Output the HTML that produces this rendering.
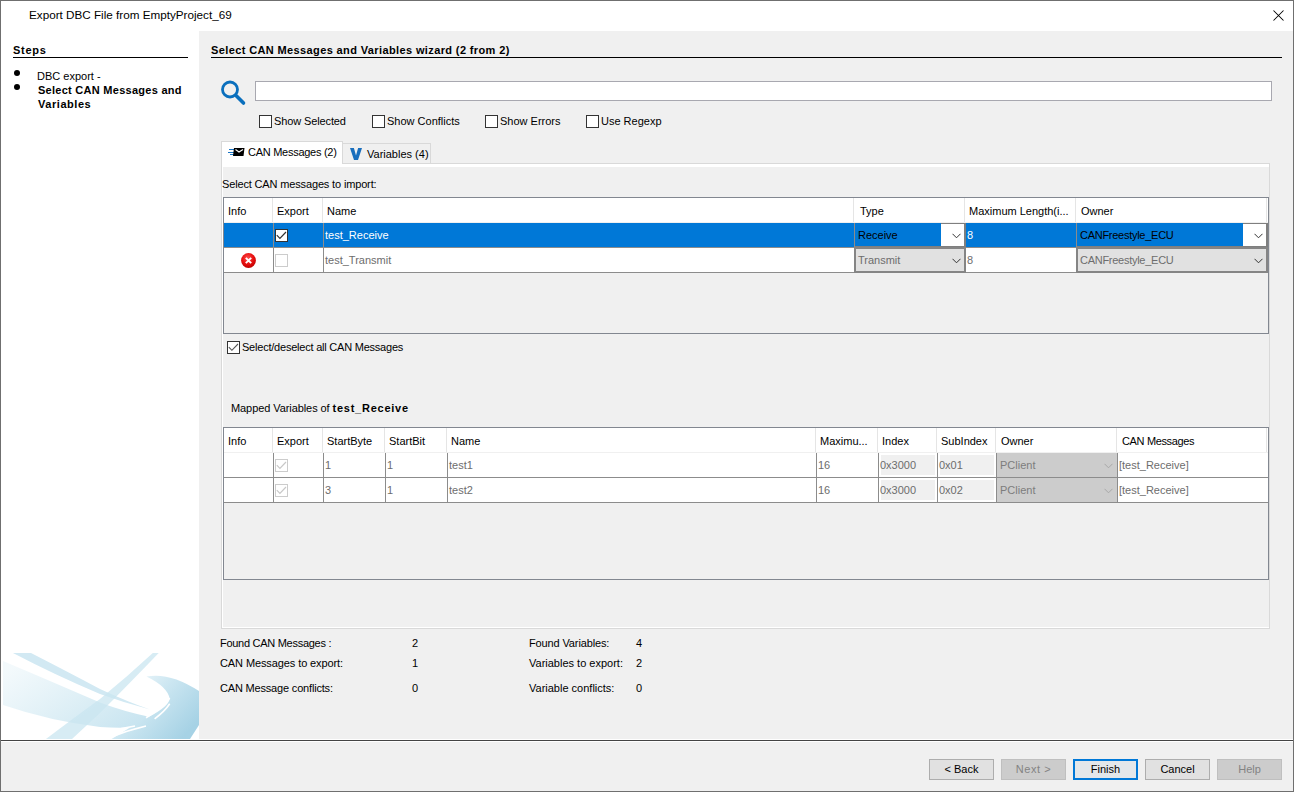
<!DOCTYPE html>
<html><head><meta charset="utf-8">
<style>
*{margin:0;padding:0;box-sizing:border-box}
html,body{width:1294px;height:792px;overflow:hidden;background:#f0f0f0}
body{position:relative;font-family:"Liberation Sans",sans-serif;font-size:11px;color:#000}
.a{position:absolute}
.t{position:absolute;white-space:nowrap;line-height:14px;margin-left:-1px}
.b{font-weight:bold}
.cb{position:absolute;width:13px;height:13px;border:1px solid #333;background:#fff}
.g{color:#6d6d6d}
.hs{position:absolute;top:0;width:1px;height:24px;background:#e5e5e5}
.hb{position:absolute;left:0;top:24px;width:1044px;height:1px;background:#f0f0f0}
.vl{position:absolute;top:25px;width:1px;height:50px;background:#8c8c8c}
.hl{position:absolute;left:0;width:1044px;height:1px;background:#8c8c8c}
.btn{position:absolute;top:759px;width:65px;height:21px;border:1px solid #adadad;background:#e1e1e1;text-align:center;line-height:19px}
.dis{background:#ccc;border-color:#bfbfbf;color:#838383}
</style></head><body>
<!-- window frame -->
<div class="a" style="left:0;top:0;width:1294px;height:792px;border:1px solid #6f6f6f"></div>
<!-- title bar -->
<div class="a" style="left:1px;top:1px;width:1292px;height:30px;background:#fff"></div>
<div class="t" style="left:30px;top:8px;font-size:11.7px">Export DBC File from EmptyProject_69</div>
<svg class="a" style="left:1272px;top:9px" width="13" height="13" viewBox="0 0 13 13"><path d="M1.5 1.5L11.5 11.5M11.5 1.5L1.5 11.5" stroke="#000" stroke-width="1.05"/></svg>
<!-- left panel -->
<div class="a" style="left:1px;top:31px;width:198px;height:708px;background:#fff"></div>

<svg class="a" style="left:0;top:645px" width="199" height="94" viewBox="0 0 199 94">
<defs>
<linearGradient id="gb" x1="0" y1="0.2" x2="1" y2="0.8"><stop offset="0" stop-color="#cfe8f2" stop-opacity="0.25"/><stop offset="0.5" stop-color="#c9e5f0" stop-opacity="0.6"/><stop offset="1" stop-color="#bfe0ee" stop-opacity="0.9"/></linearGradient>
<linearGradient id="gc" x1="0.1" y1="0.1" x2="1" y2="0.7"><stop offset="0" stop-color="#f2f9fc"/><stop offset="0.45" stop-color="#cbe6f1"/><stop offset="1" stop-color="#a6d2e5"/></linearGradient>
</defs>
<path d="M3 16 Q55 38 100 57.6 Q125 67 150 72 L162 80 Q130 84 100 82 Q50 76 3 60 Z" fill="url(#gb)"/>
<path d="M13 8 L31 8 Q70 28 100 44 Q128 57 150 64.5 Q125 58 100 49 Q55 30 13 8 Z" fill="#d2e9f3"/>
<path d="M152.8 8 L158.7 8 Q128 40 100 68 L72 94 L46 94 Q75 72 100 54 Q128 31 152.8 8 Z" fill="#c9e5f0" fill-opacity="0.75"/>
<path d="M146.5 31.5 Q170 27 199 46 L199 80 L190 94 L111.6 94 Q130 82 150 71 Q168 62 169.7 54 Q168 42 146.5 31.5 Z" fill="url(#gc)"/>
<path d="M146 72.7 Q162 64 169.7 53 M154.6 73.8 Q165 66 169.7 58.7 M86 94 Q110 85 135 81 M106 94 Q125 86 146 81" stroke="#fff" stroke-width="1.6" fill="none"/>
</svg>

<div class="a" style="left:1px;top:739px;width:1292px;height:1px;background:#fff"></div>
<div class="a" style="left:1px;top:740px;width:1292px;height:1px;background:#444"></div>
<div class="a" style="left:1px;top:741px;width:1292px;height:1px;background:#fff"></div>

<div class="t b" style="left:14px;top:43px;letter-spacing:0.75px">Steps</div>
<div class="a" style="left:13px;top:57px;width:175px;height:1px;background:#000"></div>
<div class="a" style="left:14px;top:70px;width:6px;height:6px;border-radius:50%;background:#000"></div>
<div class="a" style="left:14px;top:84px;width:6px;height:6px;border-radius:50%;background:#000"></div>
<div class="t" style="left:38px;top:69px">DBC export -</div>
<div class="t b" style="left:39px;top:83px;letter-spacing:0.27px">Select CAN Messages and</div>
<div class="t b" style="left:39px;top:97px;letter-spacing:0.55px">Variables</div>

<!-- header -->
<div class="t b" style="left:212px;top:43px;letter-spacing:0.38px">Select CAN Messages and Variables wizard (2 from 2)</div>
<div class="a" style="left:211px;top:57px;width:1071px;height:1px;background:#000"></div>

<!-- search -->
<svg class="a" style="left:219px;top:79px" width="28" height="28" viewBox="0 0 28 28"><circle cx="11" cy="10.5" r="7.5" fill="none" stroke="#0a6fbd" stroke-width="2.8"/><path d="M17 16.5L24.5 24" stroke="#0a6fbd" stroke-width="3.6" stroke-linecap="round"/></svg>
<div class="a" style="left:255px;top:81px;width:1017px;height:20px;border:1px solid #a8a8b0;background:#fff"></div>

<div class="cb" style="left:259px;top:115px"></div><div class="t" style="left:275px;top:114px;letter-spacing:-0.12px">Show Selected</div>
<div class="cb" style="left:372px;top:115px"></div><div class="t" style="left:388px;top:114px">Show Conflicts</div>
<div class="cb" style="left:485px;top:115px"></div><div class="t" style="left:501px;top:114px">Show Errors</div>
<div class="cb" style="left:586px;top:115px"></div><div class="t" style="left:602px;top:114px">Use Regexp</div>

<!-- tabs -->
<div class="a" style="left:221px;top:163px;width:1049px;height:466px;border:1px solid #d9d9d9;background:#fff"></div>
<div class="a" style="left:223px;top:167px;width:1046px;height:460px;background:#f0f0f0"></div>
<div class="a" style="left:342px;top:143px;width:89px;height:20px;border:1px solid #d9d9d9;border-bottom:none;background:#f0f0f0"></div>
<div class="a" style="left:221px;top:141px;width:122px;height:23px;border:1px solid #d9d9d9;border-bottom:none;background:#fff"></div>
<svg class="a" style="left:227px;top:147px" width="19" height="10" viewBox="0 0 19 10"><path d="M2 2.5H7M1 5.5H7M3 7.5H7" stroke="#1a75c4" stroke-width="1"/><path d="M7 1H17.5L16.5 9H6Z" fill="#000"/><path d="M8.5 2.5L12 5L16 2.5" fill="none" stroke="#fff" stroke-width="1.2"/></svg>
<div class="t" style="left:249px;top:145px;letter-spacing:-0.27px">CAN Messages (2)</div>
<svg class="a" style="left:350px;top:148px" width="12" height="12" viewBox="0 0 12 12"><path d="M0 0H3.9L6 7.6L8.1 0H12L8 12H4Z" fill="#1a6fbd"/></svg>
<div class="t" style="left:368px;top:147px">Variables (4)</div>

<div class="t" style="left:223px;top:177px;letter-spacing:-0.15px">Select CAN messages to import:</div>

<!-- table 1 -->
<div class="a" style="left:223px;top:197px;width:1046px;height:137px;border:1px solid #828790;background:#f0f0f0">
  <div class="a" style="left:0;top:0;width:1044px;height:25px;background:#fff"></div><div class="hb"></div>
  <div class="hs" style="left:48px"></div>
  <div class="hs" style="left:98px"></div>
  <div class="hs" style="left:629px"></div>
  <div class="hs" style="left:740px"></div>
  <div class="hs" style="left:851px"></div>
  <div class="hs" style="left:1042px"></div>
  <div class="t" style="left:5px;top:6px">Info</div>
  <div class="t" style="left:54px;top:6px">Export</div>
  <div class="t" style="left:104px;top:6px">Name</div>
  <div class="t" style="left:637px;top:6px">Type</div>
  <div class="t" style="left:746px;top:6px">Maximum Length(i...</div>
  <div class="t" style="left:858px;top:6px">Owner</div>
  <!-- row 1 selected -->
  <div class="a" style="left:0;top:25px;width:1044px;height:24px;background:#0078d7"></div>
  <!-- row 2 -->
  <div class="a" style="left:0;top:50px;width:1044px;height:24px;background:#fff"></div>
  <div class="hl" style="top:49px"></div>
  <div class="hl" style="top:74px"></div>
  <div class="vl" style="left:49px"></div>
  <div class="vl" style="left:99px"></div>
  <div class="vl" style="left:630px"></div>
  <div class="vl" style="left:741px"></div>
  <div class="vl" style="left:852px"></div>
  <div class="cb" style="left:51px;top:31px"></div>
  <svg class="a" style="left:51px;top:31px" width="13" height="13" viewBox="0 0 13 13"><path d="M1.8 6.2L4.9 9.3L11 3" fill="none" stroke="#333" stroke-width="1.2"/></svg>
  <div class="t" style="left:102px;top:30px;color:#fff">test_Receive</div>
  <div class="cb" style="left:51px;top:56px;border-color:#ccc"></div>
  <svg class="a" style="left:17px;top:55px" width="16" height="16" viewBox="0 0 16 16"><defs><radialGradient id="rg" cx="0.45" cy="0.35" r="0.65"><stop offset="0" stop-color="#ff5050"/><stop offset="0.6" stop-color="#e81010"/><stop offset="1" stop-color="#c00000"/></radialGradient></defs><circle cx="7.5" cy="7.5" r="7.4" fill="url(#rg)"/><path d="M4.8 4.8L10.2 10.2M10.2 4.8L4.8 10.2" stroke="#fff" stroke-width="1.9"/></svg>
  <div class="t" style="left:102px;top:55px;color:#6d6d6d">test_Transmit</div>
  <!-- combos row1 -->
  <div class="a" style="left:631px;top:25px;width:111px;height:25px;border-right:2px solid #7f7f7f;border-bottom:2px solid #7f7f7f;background:#0078d7"></div>
  <div class="a" style="left:717px;top:25px;width:23px;height:23px;border-top:1px solid #7f7f7f;background:#fff"></div>
  <svg class="a" style="left:728px;top:35px" width="9" height="6" viewBox="0 0 9 6"><path d="M0.5 0.8L4.5 4.8L8.5 0.8" fill="none" stroke="#333" stroke-width="1"/></svg>
  <div class="t" style="left:635px;top:30px">Receive</div>
  <div class="t" style="left:744px;top:30px;color:#fff">8</div>
  <div class="a" style="left:853px;top:25px;width:191px;height:25px;border-right:2px solid #7f7f7f;border-bottom:2px solid #7f7f7f;background:#0078d7"></div>
  <div class="a" style="left:1019px;top:25px;width:23px;height:23px;border-top:1px solid #7f7f7f;background:#fff"></div>
  <svg class="a" style="left:1030px;top:35px" width="9" height="6" viewBox="0 0 9 6"><path d="M0.5 0.8L4.5 4.8L8.5 0.8" fill="none" stroke="#333" stroke-width="1"/></svg>
  <div class="t" style="left:857px;top:30px;letter-spacing:-0.27px">CANFreestyle_ECU</div>
  <!-- combos row2 -->
  <div class="a" style="left:630px;top:49px;width:112px;height:26px;border:2px solid #858585;background:#e1e1e1"></div>
  <svg class="a" style="left:728px;top:60px" width="9" height="6" viewBox="0 0 9 6"><path d="M0.5 0.8L4.5 4.8L8.5 0.8" fill="none" stroke="#333" stroke-width="1"/></svg>
  <div class="t g" style="left:635px;top:55px">Transmit</div>
  <div class="t g" style="left:744px;top:55px">8</div>
  <div class="a" style="left:852px;top:49px;width:192px;height:26px;border:2px solid #858585;background:#e1e1e1"></div>
  <svg class="a" style="left:1030px;top:60px" width="9" height="6" viewBox="0 0 9 6"><path d="M0.5 0.8L4.5 4.8L8.5 0.8" fill="none" stroke="#333" stroke-width="1"/></svg>
  <div class="t g" style="left:857px;top:55px;letter-spacing:-0.27px">CANFreestyle_ECU</div>
</div>

<div class="cb" style="left:227px;top:341px"></div>
<svg class="a" style="left:227px;top:341px" width="13" height="13" viewBox="0 0 13 13"><path d="M1.8 6.2L4.9 9.3L11 3" fill="none" stroke="#555" stroke-width="1.1"/></svg>
<div class="t" style="left:243px;top:340px;letter-spacing:-0.22px">Select/deselect all CAN Messages</div>
<div class="t" style="left:232px;top:401px;letter-spacing:-0.08px">Mapped Variables of <b style="letter-spacing:0.75px">test_Receive</b></div>

<!-- table 2 -->
<div class="a" style="left:223px;top:427px;width:1046px;height:153px;border:1px solid #828790;background:#f0f0f0">
  <div class="a" style="left:0;top:0;width:1044px;height:25px;background:#fff"></div><div class="hb"></div>
  <div class="hs" style="left:48px"></div>
  <div class="hs" style="left:98px"></div>
  <div class="hs" style="left:160px"></div>
  <div class="hs" style="left:222px"></div>
  <div class="hs" style="left:591px"></div>
  <div class="hs" style="left:653px"></div>
  <div class="hs" style="left:712px"></div>
  <div class="hs" style="left:771px"></div>
  <div class="hs" style="left:892px"></div>
  <div class="hs" style="left:1042px"></div>
  <div class="t" style="left:5px;top:6px">Info</div>
  <div class="t" style="left:54px;top:6px">Export</div>
  <div class="t" style="left:104px;top:6px">StartByte</div>
  <div class="t" style="left:166px;top:6px">StartBit</div>
  <div class="t" style="left:228px;top:6px">Name</div>
  <div class="t" style="left:597px;top:6px">Maximu...</div>
  <div class="t" style="left:659px;top:6px">Index</div>
  <div class="t" style="left:718px;top:6px">SubIndex</div>
  <div class="t" style="left:778px;top:6px">Owner</div>
  <div class="t" style="left:899px;top:6px;letter-spacing:-0.35px">CAN Messages</div>
  <div class="a" style="left:0;top:25px;width:1044px;height:50px;background:#fff"></div>
  <div class="hl" style="top:49px"></div>
  <div class="hl" style="top:74px"></div>
  <div class="vl" style="left:49px"></div>
  <div class="vl" style="left:99px"></div>
  <div class="vl" style="left:161px"></div>
  <div class="vl" style="left:223px"></div>
  <div class="vl" style="left:592px"></div>
  <div class="vl" style="left:654px"></div>
  <div class="vl" style="left:713px"></div>
  <div class="vl" style="left:772px"></div>
  <div class="vl" style="left:893px"></div>
  <!-- row cells -->
  <div class="cb" style="left:51px;top:31px;border-color:#ccc"></div>
  <svg class="a" style="left:51px;top:31px" width="13" height="13" viewBox="0 0 13 13"><path d="M1.8 6.2L4.9 9.3L11 3" fill="none" stroke="#c8c8c8" stroke-width="1.2"/></svg>
  <div class="cb" style="left:51px;top:56px;border-color:#ccc"></div>
  <svg class="a" style="left:51px;top:56px" width="13" height="13" viewBox="0 0 13 13"><path d="M1.8 6.2L4.9 9.3L11 3" fill="none" stroke="#c8c8c8" stroke-width="1.2"/></svg>
  <div class="t g" style="left:102px;top:30px">1</div>
  <div class="t g" style="left:102px;top:55px">3</div>
  <div class="t g" style="left:164px;top:30px">1</div>
  <div class="t g" style="left:164px;top:55px">1</div>
  <div class="t g" style="left:226px;top:30px">test1</div>
  <div class="t g" style="left:226px;top:55px">test2</div>
  <div class="t g" style="left:595px;top:30px">16</div>
  <div class="t g" style="left:595px;top:55px">16</div>
  <div class="a" style="left:657px;top:27px;width:54px;height:20px;background:#f0f0f0"></div>
  <div class="a" style="left:657px;top:52px;width:54px;height:20px;background:#f0f0f0"></div>
  <div class="t g" style="left:657px;top:30px">0x3000</div>
  <div class="t g" style="left:657px;top:55px">0x3000</div>
  <div class="a" style="left:716px;top:27px;width:54px;height:20px;background:#f0f0f0"></div>
  <div class="a" style="left:716px;top:52px;width:54px;height:20px;background:#f0f0f0"></div>
  <div class="t g" style="left:716px;top:30px">0x01</div>
  <div class="t g" style="left:716px;top:55px">0x02</div>
  <div class="a" style="left:773px;top:25px;width:120px;height:24px;background:#ccc"></div>
  <div class="a" style="left:773px;top:50px;width:120px;height:24px;background:#ccc"></div>
  <svg class="a" style="left:880px;top:35px" width="9" height="6" viewBox="0 0 9 6"><path d="M0.5 0.8L4.5 4.8L8.5 0.8" fill="none" stroke="#a8a8a8" stroke-width="1"/></svg>
  <svg class="a" style="left:880px;top:60px" width="9" height="6" viewBox="0 0 9 6"><path d="M0.5 0.8L4.5 4.8L8.5 0.8" fill="none" stroke="#a8a8a8" stroke-width="1"/></svg>
  <div class="t" style="left:777px;top:30px;color:#7d7d7d">PClient</div>
  <div class="t" style="left:777px;top:55px;color:#7d7d7d">PClient</div>
  <div class="t g" style="left:896px;top:30px">[test_Receive]</div>
  <div class="t g" style="left:896px;top:55px">[test_Receive]</div>
</div>

<!-- stats -->
<div class="t" style="left:221px;top:636px;letter-spacing:-0.28px">Found CAN Messages :</div>
<div class="t" style="left:221px;top:656px;letter-spacing:-0.1px">CAN Messages to export:</div>
<div class="t" style="left:221px;top:681px;letter-spacing:-0.18px">CAN Message conflicts:</div>
<div class="t" style="left:413px;top:636px">2</div>
<div class="t" style="left:413px;top:656px">1</div>
<div class="t" style="left:413px;top:681px">0</div>
<div class="t" style="left:530px;top:636px;letter-spacing:-0.13px">Found Variables:</div>
<div class="t" style="left:530px;top:656px">Variables to export:</div>
<div class="t" style="left:530px;top:681px">Variable conflicts:</div>
<div class="t" style="left:637px;top:636px">4</div>
<div class="t" style="left:637px;top:656px">2</div>
<div class="t" style="left:637px;top:681px">0</div>

<!-- buttons -->
<div class="btn" style="left:929px">&lt; Back</div>
<div class="btn dis" style="left:1001px;letter-spacing:0.6px">Next &gt;</div>
<div class="btn" style="left:1073px;border:2px solid #0078d7;background:#e3e7ea;line-height:17px">Finish</div>
<div class="btn" style="left:1145px">Cancel</div>
<div class="btn dis" style="left:1217px">Help</div>
</body></html>
